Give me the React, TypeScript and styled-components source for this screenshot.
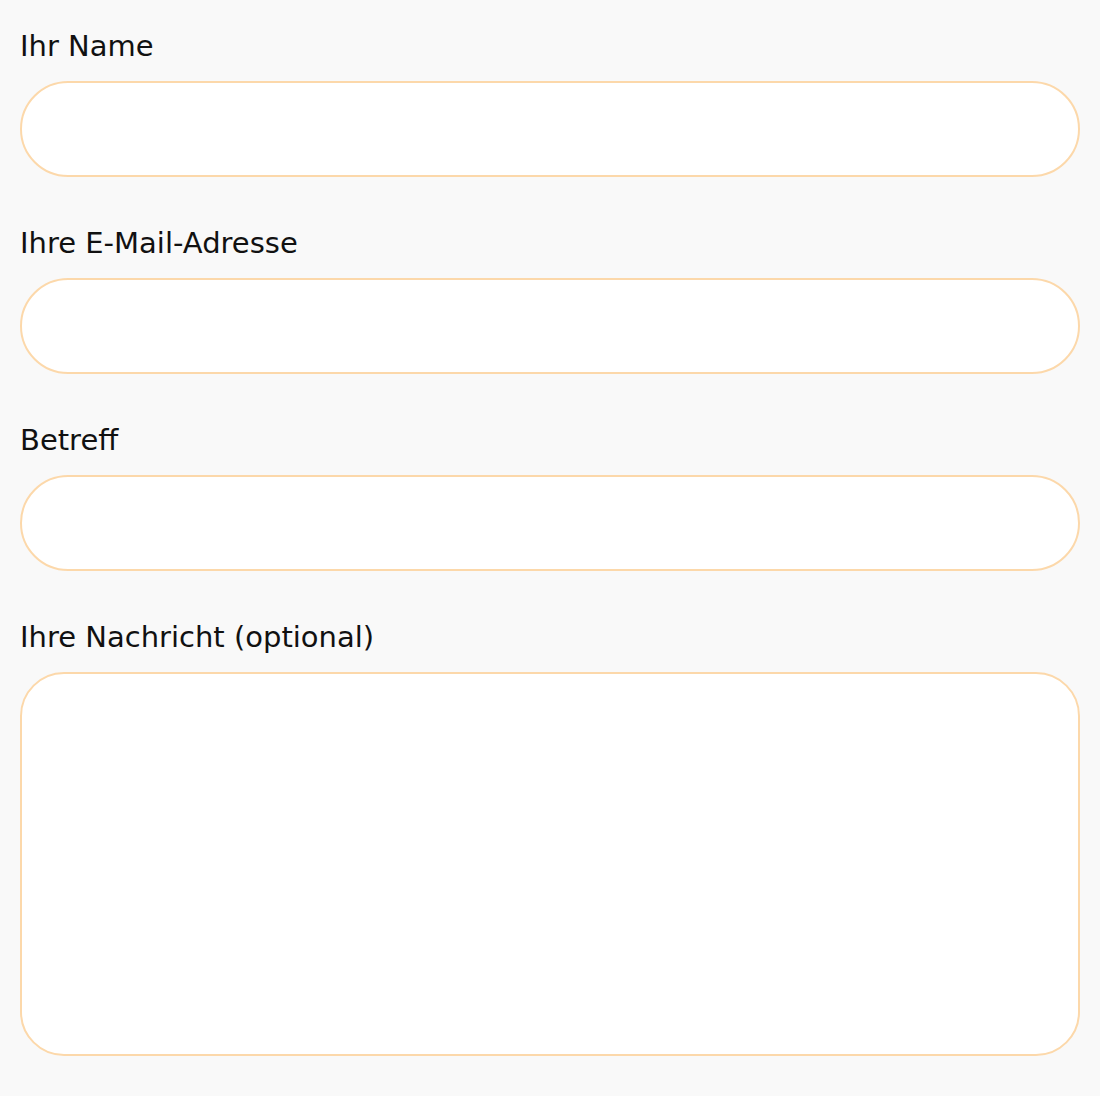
import React from "react";
import styled, { createGlobalStyle } from "styled-components";

const Global = createGlobalStyle`
  html, body { margin: 0; padding: 0; background: #f9f9f9; }
  * { box-sizing: border-box; }
`;

const Form = styled.form`
  display: flex;
  flex-direction: column;
  gap: 44px;
  padding: 24px 20px 40px;
  font-family: "DejaVu Sans", "Liberation Sans", sans-serif;
`;

const Field = styled.div`
  display: flex;
  flex-direction: column;
  gap: 13px;
`;

const Label = styled.label`
  font-size: 29px;
  line-height: 44px;
  color: #111111;
  font-weight: 400;
`;

const Input = styled.input`
  width: 100%;
  height: 96px;
  border: 2px solid #fcd8aa;
  border-radius: 48px;
  background: #ffffff;
  padding: 0 32px;
  font: inherit;
  outline: none;
`;

const TextArea = styled.textarea`
  width: 100%;
  height: 384px;
  border: 2px solid #fcd8aa;
  border-radius: 44px;
  background: #ffffff;
  padding: 24px 32px;
  font: inherit;
  outline: none;
  resize: none;
  display: block;
`;

export default function App() {
  return (
    <>
      <Global />
      <Form>
        <Field>
          <Label>Ihr Name</Label>
          <Input type="text" />
        </Field>
        <Field>
          <Label>Ihre E-Mail-Adresse</Label>
          <Input type="email" />
        </Field>
        <Field>
          <Label>Betreff</Label>
          <Input type="text" />
        </Field>
        <Field>
          <Label>Ihre Nachricht (optional)</Label>
          <TextArea />
        </Field>
      </Form>
    </>
  );
}
